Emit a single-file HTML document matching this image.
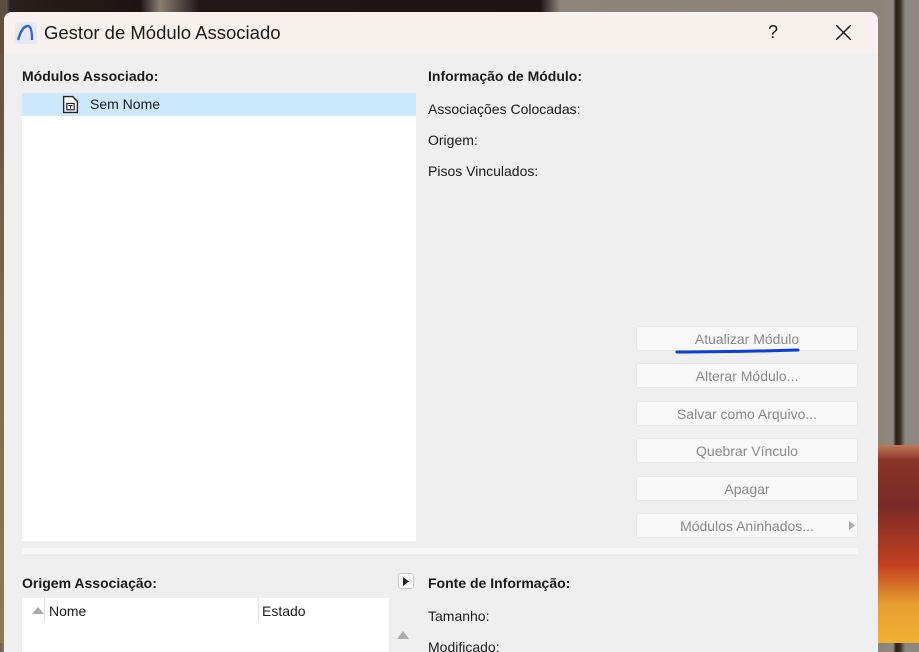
<!DOCTYPE html>
<html><head><meta charset="utf-8"><style>
*{margin:0;padding:0;box-sizing:border-box}
body{width:919px;height:643px;overflow:hidden;position:relative;font-family:"Segoe UI","Liberation Sans",sans-serif;font-size:14px;color:#1a1a1a;
background:linear-gradient(90deg,#6b5a4e 0,#8a7a6c 4px,#2a1e1e 10px,#1c1414 140px,#8a7e72 160px,#201818 200px,#1d1515 540px,#8f857a 560px,#8c8478 878px,#8e8880 893px,#2a1f18 896px,#3b2c22 900px,#8d877f 905px,#8d877f 919px)}
.bg2{position:absolute;left:878px;top:445px;width:41px;height:198px;background:linear-gradient(180deg,#c07a5a 0,#8a3428 15px,#7a2a28 60px,#c24020 120px,#e8a030 160px,#f0b030 198px)}
.bgl{position:absolute;left:0;top:0;width:6px;height:643px;background:linear-gradient(180deg,#5e4c40,#7a6a50 50%,#8a7c50)}
.win{position:absolute;left:4px;top:12px;width:874px;height:640px;background:#efefef;border-radius:8px 8px 0 0;overflow:hidden}
.title{height:42px;background:#f7f1ed;position:relative}
.title .t{position:absolute;left:40px;top:10px;font-size:18.5px;color:#1a1a1a}
.abs{position:absolute}
.b{font-weight:bold}
.list{position:absolute;background:#fff}
.btn{position:absolute;left:632px;width:222px;height:25px;background:#f8f8f8;border:1px solid #e6e6e6;border-radius:3px;text-align:center;line-height:24px;color:#8a8a8a;font-size:14px}
</style></head><body>
<div class="bgl"></div><div class="bg2"></div>
<div class="win">
 <div class="title">
  <svg class="abs" style="left:11px;top:10px" width="22" height="22" viewBox="0 0 22 22"><rect x="0" y="0" width="22" height="22" rx="3" fill="#e6e9f2"/><path d="M3 18 C6 8 9 4 13 4 C16 4 17 10 17 18" fill="none" stroke="#3a66c8" stroke-width="2.4"/></svg>
  <div class="t">Gestor de Módulo Associado</div>
  <div class="abs" style="left:764px;top:10px;font-size:18px">?</div>
  <svg class="abs" style="left:832px;top:13px" width="15" height="15"><path d="M0 0L15 15M15 0L0 15" stroke="#1a1a1a" stroke-width="1.5"/></svg>
 </div>
 <div class="abs b" style="left:18px;top:56px">Módulos Associado:</div>
 <div class="list" style="left:18px;top:81px;width:394px;height:448px">
  <div style="height:23px;background:#cce8fc;position:relative">
   <svg class="abs" style="left:40px;top:2px" width="17" height="19" viewBox="0 0 16 18"><path d="M1.5 1.5H10L14.5 6V16.5H1.5Z" fill="#fff" stroke="#222" stroke-width="1.3"/><rect x="4.5" y="8" width="7" height="6" fill="none" stroke="#222" stroke-width="1.1"/><path d="M6 10H10M8 10V13" stroke="#222"/></svg>
   <div class="abs" style="left:68px;top:3px">Sem Nome</div>
  </div>
 </div>
 <div class="abs b" style="left:424px;top:56px">Informação de Módulo:</div>
 <div class="abs" style="left:424px;top:89px">Associações Colocadas:</div>
 <div class="abs" style="left:424px;top:120px">Origem:</div>
 <div class="abs" style="left:424px;top:151px">Pisos Vinculados:</div>
 <div class="btn" style="top:314px">Atualizar Módulo</div>
 <svg class="abs" style="left:670px;top:334px" width="130" height="10"><path d="M3 6 C40 6 90 5 124 4" stroke="#0a3fd8" stroke-width="3" fill="none" stroke-linecap="round"/></svg>
 <div class="btn" style="top:351px">Alterar Módulo...</div>
 <div class="btn" style="top:389px">Salvar como Arquivo...</div>
 <div class="btn" style="top:426px">Quebrar Vínculo</div>
 <div class="btn" style="top:464px">Apagar</div>
 <div class="btn" style="top:501px">Módulos Aninhados...<svg class="abs" style="right:2px;top:7px" width="6" height="9"><path d="M0 0L6 4.5L0 9Z" fill="#aaa"/></svg></div>
 <div class="abs" style="left:18px;top:536px;width:836px;height:6px;background:#f8f8f8"></div>
 <div class="abs b" style="left:18px;top:563px">Origem Associação:</div>
 <div class="list" style="left:18px;top:586px;width:367px;height:60px">
  <svg class="abs" style="left:10px;top:9px" width="12" height="7"><path d="M0 7L6 0L12 7Z" fill="#aaa"/></svg>
  <div class="abs" style="left:22px;top:0;width:1px;height:23px;background:#e2e2e2"></div>
  <div class="abs" style="left:27px;top:5px">Nome</div>
  <div class="abs" style="left:236px;top:0;width:1px;height:23px;background:#e2e2e2"></div>
  <div class="abs" style="left:240px;top:5px">Estado</div>
 </div>
 <div class="abs" style="left:394px;top:561px;width:16px;height:16px;background:#fafafa;border:1px solid #ccc;border-radius:3px"><svg class="abs" style="left:4px;top:3px" width="6" height="9"><path d="M0 0L6 4.5L0 9Z" fill="#222"/></svg></div>
 <svg class="abs" style="left:393px;top:619px" width="12" height="8"><path d="M0 8L6 0L12 8Z" fill="#aaa"/></svg>
 <div class="abs b" style="left:424px;top:563px">Fonte de Informação:</div>
 <div class="abs" style="left:424px;top:596px">Tamanho:</div>
 <div class="abs" style="left:424px;top:627px">Modificado:</div>
</div>
</body></html>
